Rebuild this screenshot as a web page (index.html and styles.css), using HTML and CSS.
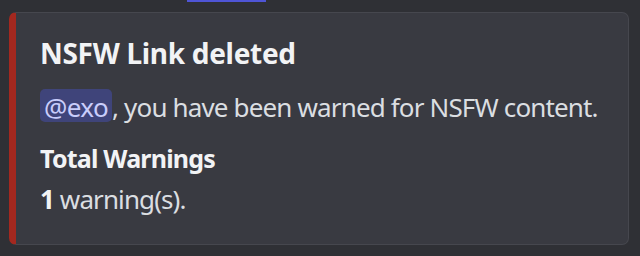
FILE: index.html
```html
<!DOCTYPE html>
<html>
<head>
<meta charset="utf-8">
<link rel="stylesheet" href="styles.css">
</head>
<body>
<div class="topbar"></div>
<div class="embed">
  <div class="title">NSFW Link deleted</div>
  <div class="desc"><span class="mention">@exo</span>, you have been warned for NSFW content.</div>
  <div class="field">
    <div class="fname">Total Warnings</div>
    <div class="fvalue"><strong>1</strong> warning(s).</div>
  </div>
</div>
</body>
</html>
```
FILE: styles.css
```css
html, body {
  margin: 0;
  padding: 0;
  background: #2f3035;
  width: 640px;
  height: 256px;
  overflow: hidden;
  font-family: "Noto Sans", "Open Sans", sans-serif;
}
.topbar {
  margin-left: 187px;
  width: 79px;
  height: 2px;
  background: #4f55d6;
}
.embed {
  margin: 10px 0 0 9px;
  width: 620px;
  height: 233px;
  box-sizing: border-box;
  background: #393a41;
  border: 1px solid #46474e;
  border-left: 7px solid #a3281f;
  border-radius: 7px;
  padding: 21px 12px 0 24px;
  color: #dbdee1;
}
.title {
  font-size: 28px;
  font-weight: 700;
  color: #f2f3f5;
  line-height: 38px;
  letter-spacing: -0.3px;
  white-space: nowrap;
}
.desc {
  margin-top: 17px;
  font-size: 26px;
  line-height: 36px;
  letter-spacing: -0.85px;
  white-space: nowrap;
}
.mention {
  display: inline-block;
  background: #3f447a;
  color: #c9cdfb;
  border-radius: 5px;
  padding: 4px 4px 0 4px;
  line-height: 29px;
  letter-spacing: -0.6px;
}
.field {
  margin-top: 16px;
}
.fname {
  font-size: 25px;
  font-weight: 700;
  color: #f2f3f5;
  line-height: 34px;
  letter-spacing: -0.8px;
}
.fvalue {
  margin-top: 6px;
  font-size: 26px;
  line-height: 36px;
  letter-spacing: -0.9px;
}
.fvalue strong {
  font-weight: 700;
  color: #f2f3f5;
}
```
